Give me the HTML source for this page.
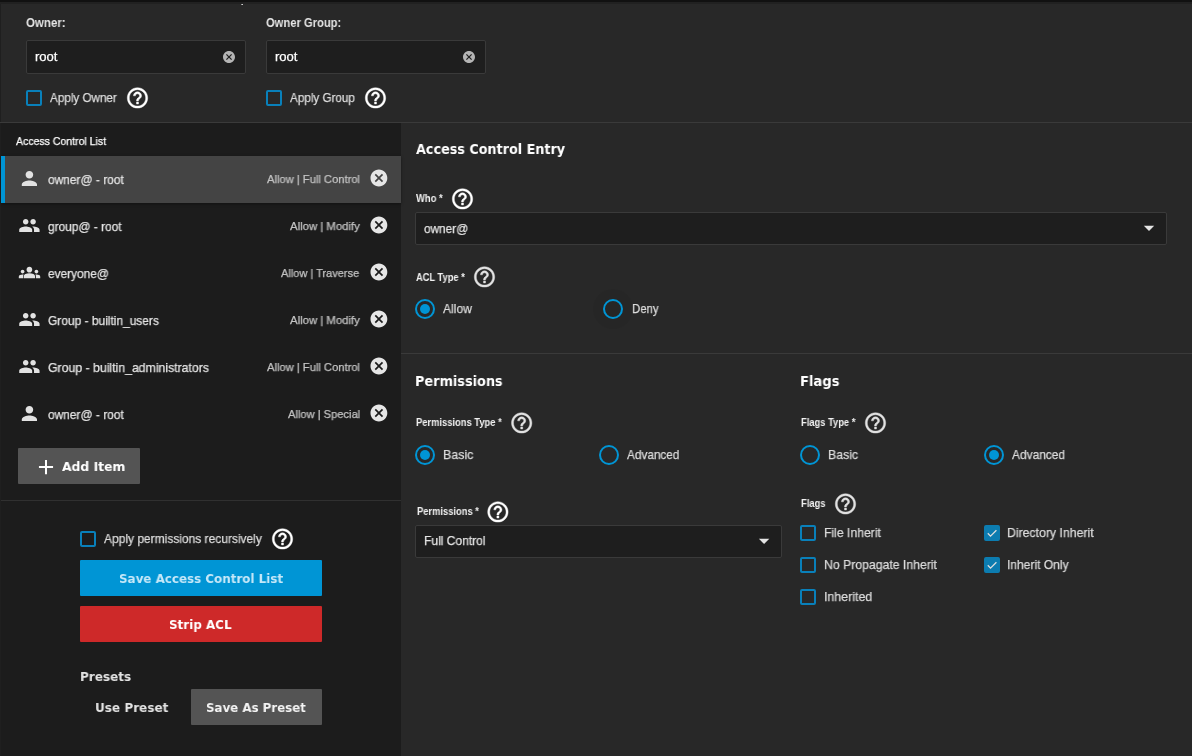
<!DOCTYPE html>
<html lang="en"><head><meta charset="utf-8"><title>Edit ACL</title>
<style>
*{box-sizing:border-box;margin:0;padding:0}
html,body{width:1192px;height:756px;overflow:hidden;background:#282828}
body{font-family:"Liberation Sans",sans-serif;color:#dcdcdc;position:relative;font-size:13px}
.abs{position:absolute}
.t{position:absolute;white-space:nowrap;line-height:1;transform-origin:0 50%;font-stretch:normal;will-change:transform}
.t{-webkit-text-stroke:0.25px currentColor}
.b,.lb,.hd{-webkit-text-stroke:0}
.b{font-weight:bold}
.lb{font-weight:bold}
.hd{font-family:"DejaVu Sans",sans-serif;font-weight:bold}
.inp{position:absolute;background:#1e1e1e;border:1px solid #3a3a3a;border-radius:2px}
.cb{position:absolute;width:16px;height:16px;border:2px solid #0980ba;border-radius:2px}
.cb.on{background:#0c7cb0;border-color:#0c7cb0}
.rad{position:absolute;width:20px;height:20px;border:2px solid #0095d5;border-radius:50%}
.rad.on::after{content:"";position:absolute;left:3px;top:3px;width:10px;height:10px;border-radius:50%;background:#0095d5}
svg{position:absolute;overflow:visible}
</style></head><body>
<!-- top shadow -->
<div class="abs" style="left:0px;top:0px;width:1192px;height:2px;background:#111111;"></div>
<div class="abs" style="left:0px;top:2px;width:1192px;height:2px;background:#212121;"></div>
<div class="abs" style="left:0px;top:4px;width:1px;height:752px;background:#1f1f1f;"></div>
<div class="abs" style="left:241px;top:4px;width:2px;height:1px;background:linear-gradient(90deg,#777,#eee);"></div>
<!-- owner / group -->
<div class="t b" id="l_owner" style="left:26px;top:16px;font-size:13px;color:#e6e6e6;transform:scaleX(0.8826)">Owner:</div>
<div class="t b" id="l_group" style="left:266px;top:16px;font-size:13px;color:#e6e6e6;transform:scaleX(0.8613)">Owner Group:</div>
<div class="inp" style="left:26px;top:40px;width:220px;height:34px"></div>
<div class="inp" style="left:266px;top:40px;width:220px;height:34px"></div>
<div class="t " id="v_owner" style="left:35px;top:50px;font-size:13px;color:#ffffff;transform:scaleX(1.0035)">root</div>
<div class="t " id="v_group" style="left:275px;top:50px;font-size:13px;color:#ffffff;transform:scaleX(1.0035)">root</div>
<svg style="left:220px;top:48px" width="18" height="18" viewBox="0 0 18 18"><g transform="translate(1.80 1.80) scale(0.6000)"><path fill="#b4b4b4" d="M12 2C6.47 2 2 6.47 2 12s4.47 10 10 10 10-4.47 10-10S17.53 2 12 2zm5 13.59L15.59 17 12 13.41 8.41 17 7 15.59 10.59 12 7 8.41 8.41 7 12 10.59 15.59 7 17 8.41 13.41 12 17 15.59z"/></g></svg>
<svg style="left:460px;top:48px" width="18" height="18" viewBox="0 0 18 18"><g transform="translate(1.80 1.80) scale(0.6000)"><path fill="#b4b4b4" d="M12 2C6.47 2 2 6.47 2 12s4.47 10 10 10 10-4.47 10-10S17.53 2 12 2zm5 13.59L15.59 17 12 13.41 8.41 17 7 15.59 10.59 12 7 8.41 8.41 7 12 10.59 15.59 7 17 8.41 13.41 12 17 15.59z"/></g></svg>
<div class="cb" style="left:26px;top:90px"></div>
<div class="t " id="l_applyowner" style="left:50px;top:91px;font-size:13px;color:#dcdcdc;transform:scaleX(0.8975)">Apply Owner</div>
<svg style="left:124px;top:84px" width="28" height="28" viewBox="0 0 28 28"><g transform="translate(1.25 1.65) scale(1.0208)"><path fill="#ffffff" stroke="#ffffff" stroke-width="0.4" stroke-linejoin="round" d="M11 18h2v-2h-2v2zm1-16C6.48 2 2 6.48 2 12s4.48 10 10 10 10-4.48 10-10S17.52 2 12 2zm0 18c-4.41 0-8-3.59-8-8s3.59-8 8-8 8 3.59 8 8-3.59 8-8 8zm0-14c-2.21 0-4 1.79-4 4h2c0-1.1.9-2 2-2s2 .9 2 2c0 2-3 1.75-3 5h2c0-2.25 3-2.5 3-5 0-2.21-1.79-4-4-4z"/></g></svg>
<div class="cb" style="left:266px;top:90px"></div>
<div class="t " id="l_applygroup" style="left:290px;top:91px;font-size:13px;color:#dcdcdc;transform:scaleX(0.8973)">Apply Group</div>
<svg style="left:362px;top:84px" width="28" height="28" viewBox="0 0 28 28"><g transform="translate(1.25 1.65) scale(1.0208)"><path fill="#ffffff" stroke="#ffffff" stroke-width="0.4" stroke-linejoin="round" d="M11 18h2v-2h-2v2zm1-16C6.48 2 2 6.48 2 12s4.48 10 10 10 10-4.48 10-10S17.52 2 12 2zm0 18c-4.41 0-8-3.59-8-8s3.59-8 8-8 8 3.59 8 8-3.59 8-8 8zm0-14c-2.21 0-4 1.79-4 4h2c0-1.1.9-2 2-2s2 .9 2 2c0 2-3 1.75-3 5h2c0-2.25 3-2.5 3-5 0-2.21-1.79-4-4-4z"/></g></svg>
<div class="abs" style="left:0px;top:122px;width:1192px;height:1px;background:#3a3a3a;"></div>
<!-- left panel -->
<div class="abs" style="left:1px;top:123px;width:400px;height:633px;background:#1c1c1c;"></div>
<div class="t " id="l_acl" style="left:16px;top:136px;font-size:11.5px;color:#ffffff;transform:scaleX(0.9147)">Access Control List</div>
<div class="abs" style="left:1px;top:156px;width:400px;height:47px;background:#444444;box-shadow:0 1px 3px rgba(0,0,0,0.4)"></div>
<div class="abs" style="left:1px;top:156px;width:4px;height:47px;background:#0095d5;"></div>
<svg style="left:17px;top:166px" width="26" height="26" viewBox="0 0 26 26"><g transform="translate(1.00 1.10) scale(0.9500)"><path fill="#e2e2e2" d="M12 12c2.21 0 4-1.79 4-4s-1.79-4-4-4-4 1.79-4 4 1.79 4 4 4zm0 2c-2.67 0-8 1.34-8 4v2h16v-2c0-2.66-5.33-4-8-4z"/></g></svg>
<div class="t " id="nm0" style="left:48px;top:173px;font-size:13px;color:#e4e4e4;transform:scaleX(0.9168)">owner@ - root</div>
<div class="t " id="pm0" style="left:267px;top:174px;font-size:11.5px;color:#c4c4c4;transform:scaleX(0.9723)">Allow | Full Control</div>
<svg style="left:367px;top:166px" width="24" height="24" viewBox="0 0 24 24"><g transform="translate(1.80 1.90) scale(0.8417)"><path fill="#e6e6e6" d="M12 2C6.47 2 2 6.47 2 12s4.47 10 10 10 10-4.47 10-10S17.53 2 12 2zm5 13.59L15.59 17 12 13.41 8.41 17 7 15.59 10.59 12 7 8.41 8.41 7 12 10.59 15.59 7 17 8.41 13.41 12 17 15.59z"/></g></svg>
<svg style="left:17px;top:213px" width="26" height="26" viewBox="0 0 26 26"><g transform="translate(1.30 1.40) scale(0.9250)"><path fill="#e2e2e2" d="M16 11c1.66 0 2.99-1.34 2.99-3S17.66 5 16 5c-1.66 0-3 1.34-3 3s1.34 3 3 3zm-8 0c1.66 0 2.99-1.34 2.99-3S9.66 5 8 5C6.34 5 5 6.34 5 8s1.34 3 3 3zm0 2c-2.33 0-7 1.17-7 3.5V19h14v-2.5c0-2.33-4.67-3.5-7-3.5zm8 0c-.29 0-.62.02-.97.05 1.16.84 1.97 1.97 1.97 3.45V19h6v-2.5c0-2.33-4.67-3.5-7-3.5z"/></g></svg>
<div class="t " id="nm1" style="left:48px;top:220px;font-size:13px;color:#e4e4e4;transform:scaleX(0.9159)">group@ - root</div>
<div class="t " id="pm1" style="left:290px;top:221px;font-size:11.5px;color:#c4c4c4;transform:scaleX(0.9877)">Allow | Modify</div>
<svg style="left:367px;top:213px" width="24" height="24" viewBox="0 0 24 24"><g transform="translate(1.80 1.90) scale(0.8417)"><path fill="#e6e6e6" d="M12 2C6.47 2 2 6.47 2 12s4.47 10 10 10 10-4.47 10-10S17.53 2 12 2zm5 13.59L15.59 17 12 13.41 8.41 17 7 15.59 10.59 12 7 8.41 8.41 7 12 10.59 15.59 7 17 8.41 13.41 12 17 15.59z"/></g></svg>
<svg style="left:17px;top:260px" width="26" height="26" viewBox="0 0 26 26"><g transform="translate(1.00 1.10) scale(0.9500)"><path fill="#e2e2e2" transform="translate(0 0)" d="M12 12.75c1.63 0 3.07.39 4.24.9 1.08.48 1.76 1.56 1.76 2.73V18H6v-1.61c0-1.18.68-2.26 1.76-2.73 1.17-.52 2.61-.91 4.24-.91zM12 6c1.66 0 3 1.34 3 3s-1.34 3-3 3-3-1.34-3-3 1.34-3 3-3z"/><path fill="#e2e2e2" transform="translate(0.85 0)" d="M4 13c1.1 0 2-.9 2-2s-.9-2-2-2-2 .9-2 2 .9 2 2 2zm1.13 1.1c-.37-.06-.74-.1-1.13-.1-.99 0-1.93.21-2.78.58C.48 14.9 0 15.62 0 16.43V18h4.5v-1.61c0-.83.23-1.61.63-2.29z"/><path fill="#e2e2e2" transform="translate(-0.6 0)" d="M20 13c1.1 0 2-.9 2-2s-.9-2-2-2-2 .9-2 2 .9 2 2 2zm4 3.43c0-.81-.48-1.53-1.22-1.85-.85-.37-1.79-.58-2.78-.58-.39 0-.76.04-1.13.1.4.68.63 1.46.63 2.29V18H24v-1.570z"/></g></svg>
<div class="t " id="nm2" style="left:48px;top:267px;font-size:13px;color:#e4e4e4;transform:scaleX(0.9133)">everyone@</div>
<div class="t " id="pm2" style="left:281px;top:268px;font-size:11.5px;color:#c4c4c4;transform:scaleX(0.9577)">Allow | Traverse</div>
<svg style="left:367px;top:260px" width="24" height="24" viewBox="0 0 24 24"><g transform="translate(1.80 1.90) scale(0.8417)"><path fill="#e6e6e6" d="M12 2C6.47 2 2 6.47 2 12s4.47 10 10 10 10-4.47 10-10S17.53 2 12 2zm5 13.59L15.59 17 12 13.41 8.41 17 7 15.59 10.59 12 7 8.41 8.41 7 12 10.59 15.59 7 17 8.41 13.41 12 17 15.59z"/></g></svg>
<svg style="left:17px;top:307px" width="26" height="26" viewBox="0 0 26 26"><g transform="translate(1.30 1.40) scale(0.9250)"><path fill="#e2e2e2" d="M16 11c1.66 0 2.99-1.34 2.99-3S17.66 5 16 5c-1.66 0-3 1.34-3 3s1.34 3 3 3zm-8 0c1.66 0 2.99-1.34 2.99-3S9.66 5 8 5C6.34 5 5 6.34 5 8s1.34 3 3 3zm0 2c-2.33 0-7 1.17-7 3.5V19h14v-2.5c0-2.33-4.67-3.5-7-3.5zm8 0c-.29 0-.62.02-.97.05 1.16.84 1.97 1.97 1.97 3.45V19h6v-2.5c0-2.33-4.67-3.5-7-3.5z"/></g></svg>
<div class="t " id="nm3" style="left:48px;top:314px;font-size:13px;color:#e4e4e4;transform:scaleX(0.9188)">Group - builtin_users</div>
<div class="t " id="pm3" style="left:290px;top:315px;font-size:11.5px;color:#c4c4c4;transform:scaleX(0.9877)">Allow | Modify</div>
<svg style="left:367px;top:307px" width="24" height="24" viewBox="0 0 24 24"><g transform="translate(1.80 1.90) scale(0.8417)"><path fill="#e6e6e6" d="M12 2C6.47 2 2 6.47 2 12s4.47 10 10 10 10-4.47 10-10S17.53 2 12 2zm5 13.59L15.59 17 12 13.41 8.41 17 7 15.59 10.59 12 7 8.41 8.41 7 12 10.59 15.59 7 17 8.41 13.41 12 17 15.59z"/></g></svg>
<svg style="left:17px;top:354px" width="26" height="26" viewBox="0 0 26 26"><g transform="translate(1.30 1.40) scale(0.9250)"><path fill="#e2e2e2" d="M16 11c1.66 0 2.99-1.34 2.99-3S17.66 5 16 5c-1.66 0-3 1.34-3 3s1.34 3 3 3zm-8 0c1.66 0 2.99-1.34 2.99-3S9.66 5 8 5C6.34 5 5 6.34 5 8s1.34 3 3 3zm0 2c-2.33 0-7 1.17-7 3.5V19h14v-2.5c0-2.33-4.67-3.5-7-3.5zm8 0c-.29 0-.62.02-.97.05 1.16.84 1.97 1.97 1.97 3.45V19h6v-2.5c0-2.33-4.67-3.5-7-3.5z"/></g></svg>
<div class="t " id="nm4" style="left:48px;top:361px;font-size:13px;color:#e4e4e4;transform:scaleX(0.9438)">Group - builtin_administrators</div>
<div class="t " id="pm4" style="left:267px;top:362px;font-size:11.5px;color:#c4c4c4;transform:scaleX(0.9723)">Allow | Full Control</div>
<svg style="left:367px;top:354px" width="24" height="24" viewBox="0 0 24 24"><g transform="translate(1.80 1.90) scale(0.8417)"><path fill="#e6e6e6" d="M12 2C6.47 2 2 6.47 2 12s4.47 10 10 10 10-4.47 10-10S17.53 2 12 2zm5 13.59L15.59 17 12 13.41 8.41 17 7 15.59 10.59 12 7 8.41 8.41 7 12 10.59 15.59 7 17 8.41 13.41 12 17 15.59z"/></g></svg>
<svg style="left:17px;top:401px" width="26" height="26" viewBox="0 0 26 26"><g transform="translate(1.00 1.10) scale(0.9500)"><path fill="#e2e2e2" d="M12 12c2.21 0 4-1.79 4-4s-1.79-4-4-4-4 1.79-4 4 1.79 4 4 4zm0 2c-2.67 0-8 1.34-8 4v2h16v-2c0-2.66-5.33-4-8-4z"/></g></svg>
<div class="t " id="nm5" style="left:48px;top:408px;font-size:13px;color:#e4e4e4;transform:scaleX(0.9168)">owner@ - root</div>
<div class="t " id="pm5" style="left:288px;top:409px;font-size:11.5px;color:#c4c4c4;transform:scaleX(0.9676)">Allow | Special</div>
<svg style="left:367px;top:401px" width="24" height="24" viewBox="0 0 24 24"><g transform="translate(1.80 1.90) scale(0.8417)"><path fill="#e6e6e6" d="M12 2C6.47 2 2 6.47 2 12s4.47 10 10 10 10-4.47 10-10S17.53 2 12 2zm5 13.59L15.59 17 12 13.41 8.41 17 7 15.59 10.59 12 7 8.41 8.41 7 12 10.59 15.59 7 17 8.41 13.41 12 17 15.59z"/></g></svg>
<div class="abs" style="left:18px;top:448px;width:122px;height:36px;background:#545454;border-radius:1px"></div>
<svg style="left:32px;top:454px" width="28" height="28" viewBox="0 0 28 28"><g transform="translate(1.90 1.00) scale(1.0083)"><path fill="#ffffff" d="M19 13h-6v6h-2v-6H5v-2h6V5h2v6h6v2z"/></g></svg>
<div class="t hd" id="t_add" style="left:62px;top:460px;font-size:13px;color:#ffffff;transform:scaleX(0.9515)">Add Item</div>
<div class="abs" style="left:1px;top:500px;width:400px;height:1px;background:#303030;"></div>
<div class="cb" style="left:80px;top:531px"></div>
<div class="t " id="l_rec" style="left:104px;top:532px;font-size:13px;color:#dcdcdc;transform:scaleX(0.9218)">Apply permissions recursively</div>
<svg style="left:269px;top:525px" width="28" height="28" viewBox="0 0 28 28"><g transform="translate(1.25 1.65) scale(1.0208)"><path fill="#ffffff" stroke="#ffffff" stroke-width="0.4" stroke-linejoin="round" d="M11 18h2v-2h-2v2zm1-16C6.48 2 2 6.48 2 12s4.48 10 10 10 10-4.48 10-10S17.52 2 12 2zm0 18c-4.41 0-8-3.59-8-8s3.59-8 8-8 8 3.59 8 8-3.59 8-8 8zm0-14c-2.21 0-4 1.79-4 4h2c0-1.1.9-2 2-2s2 .9 2 2c0 2-3 1.75-3 5h2c0-2.25 3-2.5 3-5 0-2.21-1.79-4-4-4z"/></g></svg>
<div class="abs" style="left:80px;top:560px;width:242px;height:36px;background:#0095d5;border-radius:1px"></div>
<div class="t hd" id="t_save" style="left:119px;top:572px;font-size:13px;color:#c6e8f8;transform:scaleX(0.9157)">Save Access Control List</div>
<div class="abs" style="left:80px;top:606px;width:242px;height:36px;background:#ce2929;border-radius:1px"></div>
<div class="t hd" id="t_strip" style="left:169px;top:618px;font-size:13px;color:#ffffff;transform:scaleX(0.9177)">Strip ACL</div>
<div class="t hd" id="t_presets" style="left:80px;top:670px;font-size:13px;color:#e4e4e4;transform:scaleX(0.9259)">Presets</div>
<div class="t hd" id="t_use" style="left:95px;top:701px;font-size:13px;color:#e4e4e4;transform:scaleX(0.9262)">Use Preset</div>
<div class="abs" style="left:191px;top:689px;width:131px;height:36px;background:#545454;border-radius:1px"></div>
<div class="t hd" id="t_sap" style="left:206px;top:701px;font-size:13px;color:#f4f4f4;transform:scaleX(0.9096)">Save As Preset</div>
<!-- right panel -->
<div class="t hd" id="h_ace" style="left:416px;top:142px;font-size:14px;color:#ffffff;transform:scaleX(0.9123)">Access Control Entry</div>
<div class="t lb" id="l_who" style="left:416px;top:194px;font-size:10.1px;color:#f2f2f2;transform:scaleX(0.9310)">Who *</div>
<svg style="left:449px;top:185px" width="28" height="28" viewBox="0 0 28 28"><g transform="translate(1.25 1.65) scale(1.0208)"><path fill="#ffffff" stroke="#ffffff" stroke-width="0.4" stroke-linejoin="round" d="M11 18h2v-2h-2v2zm1-16C6.48 2 2 6.48 2 12s4.48 10 10 10 10-4.48 10-10S17.52 2 12 2zm0 18c-4.41 0-8-3.59-8-8s3.59-8 8-8 8 3.59 8 8-3.59 8-8 8zm0-14c-2.21 0-4 1.79-4 4h2c0-1.1.9-2 2-2s2 .9 2 2c0 2-3 1.75-3 5h2c0-2.25 3-2.5 3-5 0-2.21-1.79-4-4-4z"/></g></svg>
<div class="inp" style="left:415px;top:212px;width:752px;height:33px"></div>
<div class="t " id="v_who" style="left:424px;top:222px;font-size:13px;color:#e4e4e4;transform:scaleX(0.9084)">owner@</div>
<svg style="left:1142px;top:224px" width="14" height="9" viewBox="0 0 14 9"><path fill="#e4e4e4" transform="translate(1.80 1.80)" d="M0 0h10.4L5.2 5.2z"/></svg>
<div class="t lb" id="l_acltype" style="left:416px;top:273px;font-size:10.1px;color:#f2f2f2;transform:scaleX(0.9218)">ACL Type *</div>
<svg style="left:471px;top:263px" width="28" height="28" viewBox="0 0 28 28"><g transform="translate(1.25 1.65) scale(1.0208)"><path fill="#e2e2e2" stroke="#e2e2e2" stroke-width="0.4" stroke-linejoin="round" d="M11 18h2v-2h-2v2zm1-16C6.48 2 2 6.48 2 12s4.48 10 10 10 10-4.48 10-10S17.52 2 12 2zm0 18c-4.41 0-8-3.59-8-8s3.59-8 8-8 8 3.59 8 8-3.59 8-8 8zm0-14c-2.21 0-4 1.79-4 4h2c0-1.1.9-2 2-2s2 .9 2 2c0 2-3 1.75-3 5h2c0-2.25 3-2.5 3-5 0-2.21-1.79-4-4-4z"/></g></svg>
<div class="rad on" style="left:415.0px;top:298.6px"></div>
<div class="t " id="r_allow" style="left:443px;top:302px;font-size:13px;color:#dcdcdc;transform:scaleX(0.9285)">Allow</div>
<div class="abs" style="left:593px;top:288.6px;width:40px;height:40px;background:rgba(0,0,0,0.04);border-radius:50%"></div>
<div class="rad" style="left:602.9px;top:298.6px"></div>
<div class="t " id="r_deny" style="left:632px;top:302px;font-size:13px;color:#dcdcdc;transform:scaleX(0.8777)">Deny</div>
<div class="abs" style="left:401px;top:353px;width:791px;height:1px;background:#3a3a3a;"></div>
<div class="t hd" id="h_perm" style="left:415px;top:374px;font-size:14px;color:#ffffff;transform:scaleX(0.9183)">Permissions</div>
<div class="t hd" id="h_flags" style="left:800px;top:374px;font-size:14px;color:#ffffff;transform:scaleX(0.9390)">Flags</div>
<div class="t lb" id="l_permtype" style="left:416px;top:418px;font-size:10.1px;color:#f2f2f2;transform:scaleX(0.9280)">Permissions Type *</div>
<svg style="left:508px;top:409px" width="28" height="28" viewBox="0 0 28 28"><g transform="translate(1.45 1.65) scale(1.0208)"><path fill="#e2e2e2" stroke="#e2e2e2" stroke-width="0.4" stroke-linejoin="round" d="M11 18h2v-2h-2v2zm1-16C6.48 2 2 6.48 2 12s4.48 10 10 10 10-4.48 10-10S17.52 2 12 2zm0 18c-4.41 0-8-3.59-8-8s3.59-8 8-8 8 3.59 8 8-3.59 8-8 8zm0-14c-2.21 0-4 1.79-4 4h2c0-1.1.9-2 2-2s2 .9 2 2c0 2-3 1.75-3 5h2c0-2.25 3-2.5 3-5 0-2.21-1.79-4-4-4z"/></g></svg>
<div class="rad on" style="left:415.0px;top:444.9px"></div>
<div class="t " id="r_pbasic" style="left:443px;top:448px;font-size:13px;color:#dcdcdc;transform:scaleX(0.9532)">Basic</div>
<div class="rad" style="left:598.9px;top:444.9px"></div>
<div class="t " id="r_padv" style="left:627px;top:448px;font-size:13px;color:#dcdcdc;transform:scaleX(0.9066)">Advanced</div>
<div class="t lb" id="l_perms" style="left:417px;top:507px;font-size:10.1px;color:#f2f2f2;transform:scaleX(0.9276)">Permissions *</div>
<svg style="left:484px;top:498px" width="28" height="28" viewBox="0 0 28 28"><g transform="translate(1.65 1.65) scale(1.0208)"><path fill="#ffffff" stroke="#ffffff" stroke-width="0.4" stroke-linejoin="round" d="M11 18h2v-2h-2v2zm1-16C6.48 2 2 6.48 2 12s4.48 10 10 10 10-4.48 10-10S17.52 2 12 2zm0 18c-4.41 0-8-3.59-8-8s3.59-8 8-8 8 3.59 8 8-3.59 8-8 8zm0-14c-2.21 0-4 1.79-4 4h2c0-1.1.9-2 2-2s2 .9 2 2c0 2-3 1.75-3 5h2c0-2.25 3-2.5 3-5 0-2.21-1.79-4-4-4z"/></g></svg>
<div class="inp" style="left:415px;top:525px;width:367px;height:33px"></div>
<div class="t " id="v_perm" style="left:424px;top:534px;font-size:13px;color:#e4e4e4;transform:scaleX(0.9253)">Full Control</div>
<svg style="left:757px;top:537px" width="14" height="9" viewBox="0 0 14 9"><path fill="#e4e4e4" transform="translate(1.90 1.80)" d="M0 0h10.4L5.2 5.2z"/></svg>
<div class="t lb" id="l_flagstype" style="left:801px;top:418px;font-size:10.1px;color:#f2f2f2;transform:scaleX(0.9262)">Flags Type *</div>
<svg style="left:862px;top:409px" width="28" height="28" viewBox="0 0 28 28"><g transform="translate(1.25 1.65) scale(1.0208)"><path fill="#e2e2e2" stroke="#e2e2e2" stroke-width="0.4" stroke-linejoin="round" d="M11 18h2v-2h-2v2zm1-16C6.48 2 2 6.48 2 12s4.48 10 10 10 10-4.48 10-10S17.52 2 12 2zm0 18c-4.41 0-8-3.59-8-8s3.59-8 8-8 8 3.59 8 8-3.59 8-8 8zm0-14c-2.21 0-4 1.79-4 4h2c0-1.1.9-2 2-2s2 .9 2 2c0 2-3 1.75-3 5h2c0-2.25 3-2.5 3-5 0-2.21-1.79-4-4-4z"/></g></svg>
<div class="rad" style="left:800.0px;top:444.9px"></div>
<div class="t " id="r_fbasic" style="left:828px;top:448px;font-size:13px;color:#dcdcdc;transform:scaleX(0.9444)">Basic</div>
<div class="rad on" style="left:983.9px;top:444.9px"></div>
<div class="t " id="r_fadv" style="left:1012px;top:448px;font-size:13px;color:#dcdcdc;transform:scaleX(0.9183)">Advanced</div>
<div class="t lb" id="l_flags" style="left:801px;top:499px;font-size:10.1px;color:#f2f2f2;transform:scaleX(0.9304)">Flags</div>
<svg style="left:832px;top:490px" width="28" height="28" viewBox="0 0 28 28"><g transform="translate(1.25 1.65) scale(1.0208)"><path fill="#e2e2e2" stroke="#e2e2e2" stroke-width="0.4" stroke-linejoin="round" d="M11 18h2v-2h-2v2zm1-16C6.48 2 2 6.48 2 12s4.48 10 10 10 10-4.48 10-10S17.52 2 12 2zm0 18c-4.41 0-8-3.59-8-8s3.59-8 8-8 8 3.59 8 8-3.59 8-8 8zm0-14c-2.21 0-4 1.79-4 4h2c0-1.1.9-2 2-2s2 .9 2 2c0 2-3 1.75-3 5h2c0-2.25 3-2.5 3-5 0-2.21-1.79-4-4-4z"/></g></svg>
<div class="cb" style="left:800px;top:525px"></div>
<div class="t " id="c_fi" style="left:824px;top:526px;font-size:13px;color:#dcdcdc;transform:scaleX(0.9371)">File Inherit</div>
<div class="cb on" style="left:984px;top:525px"></div><svg style="left:984px;top:525px" width="16" height="16" viewBox="0 0 16 16"><path d="M3.8 8.3 L6.5 11.2 L12.4 5.2" fill="none" stroke="#dedede" stroke-width="1.25"/></svg>
<div class="t " id="c_di" style="left:1007px;top:526px;font-size:13px;color:#dcdcdc;transform:scaleX(0.9438)">Directory Inherit</div>
<div class="cb" style="left:800px;top:557px"></div>
<div class="t " id="c_np" style="left:824px;top:558px;font-size:13px;color:#dcdcdc;transform:scaleX(0.9412)">No Propagate Inherit</div>
<div class="cb on" style="left:984px;top:557px"></div><svg style="left:984px;top:557px" width="16" height="16" viewBox="0 0 16 16"><path d="M3.8 8.3 L6.5 11.2 L12.4 5.2" fill="none" stroke="#dedede" stroke-width="1.25"/></svg>
<div class="t " id="c_io" style="left:1007px;top:558px;font-size:13px;color:#dcdcdc;transform:scaleX(0.9268)">Inherit Only</div>
<div class="cb" style="left:800px;top:589px"></div>
<div class="t " id="c_inh" style="left:824px;top:590px;font-size:13px;color:#dcdcdc;transform:scaleX(0.9537)">Inherited</div>
</body></html>
